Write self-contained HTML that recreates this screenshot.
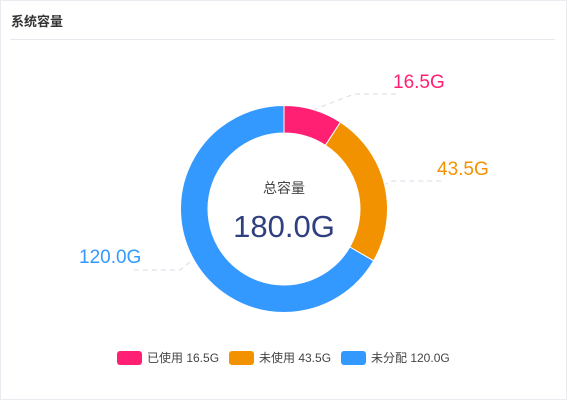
<!DOCTYPE html>
<html><head><meta charset="utf-8"><style>
html,body{margin:0;padding:0;background:#fff;}
body{width:567px;height:400px;position:relative;overflow:hidden;font-family:"Liberation Sans","Noto Sans CJK SC",sans-serif;}
.frame{position:absolute;left:0;top:0;width:565px;height:398px;border:1px solid #e8ecf0;}
.title{position:absolute;left:11px;top:11px;font-size:13px;font-weight:bold;color:#333;}
.div{position:absolute;left:10px;top:39px;width:545px;height:1px;background:#e6e9ee;}
.leg{position:absolute;top:349px;font-size:12px;color:#444;display:flex;align-items:center;}
.leg i{display:inline-block;width:25px;height:14px;border-radius:3px;margin-right:5px;}
</style></head><body>
<div class="frame"></div>
<div class="title">系统容量</div>
<div class="div"></div>
<svg width="567" height="400" style="position:absolute;left:0;top:0">
<g fill="none" stroke="#dde3ec" stroke-width="1.2" stroke-dasharray="5,4">
<polyline points="313,110 354,94 398,94"/>
<polyline points="383,185 393,181 444,181"/>
<polyline points="190,262 180,270 133,270"/>
</g>
<g stroke="#fff" stroke-width="1">
<path d="M284,105.5 A103.5,103.5 0 0 1 340.4,122.2 L325.4,145.3 A76,76 0 0 0 284,133 Z" fill="#ff1f73"/>
<path d="M340.4,122.2 A103.5,103.5 0 0 1 373.6,260.8 L349.8,247 A76,76 0 0 0 325.4,145.3 Z" fill="#f39200"/>
<path d="M373.6,260.8 A103.5,103.5 0 1 1 284,105.5 L284,133 A76,76 0 1 0 349.8,247 Z" fill="#3399ff"/>
</g>
<text x="284" y="193" text-anchor="middle" font-size="14" fill="#444" font-family="Liberation Sans,Noto Sans CJK SC,sans-serif">总容量</text>
<text x="284" y="237" text-anchor="middle" font-size="31" fill="#2f3f7f" font-family="Liberation Sans,sans-serif">180.0G</text>
<text x="393" y="88" font-size="19" fill="#ff1f73" font-family="Liberation Sans,sans-serif">16.5G</text>
<text x="437" y="175" font-size="19" fill="#f39200" font-family="Liberation Sans,sans-serif">43.5G</text>
<text x="79" y="263" font-size="19" fill="#3399ff" font-family="Liberation Sans,sans-serif">120.0G</text>
</svg>
<div class="leg" style="left:117px"><i style="background:#ff1f73"></i>已使用 16.5G</div>
<div class="leg" style="left:229px"><i style="background:#f39200"></i>未使用 43.5G</div>
<div class="leg" style="left:341px"><i style="background:#3399ff"></i>未分配 120.0G</div>
</body></html>
